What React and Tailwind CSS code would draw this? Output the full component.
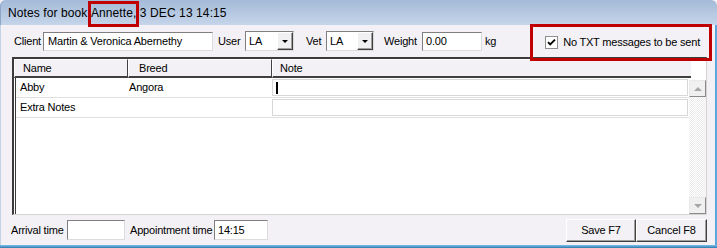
import React from "react";

const sunken =
  "bg-white border border-t-[#7f7f7f] border-l-[#7f7f7f] border-r-[#dcdcdc] border-b-[#dcdcdc]";
const raised =
  "bg-[#f3f1f6] border border-t-white border-l-white border-r-[#404040] border-b-[#404040] shadow-[inset_-1px_-1px_0_#a0a0a0]";

function DropBtn() {
  return (
    <div className="w-[16px] h-full flex items-center justify-center bg-[#f0eff2] border border-t-white border-l-white border-r-[#404040] border-b-[#404040] shadow-[inset_-1px_-1px_0_#a0a0a0]">
      <div className="w-0 h-0 border-l-[3px] border-r-[3px] border-t-[3px] border-l-transparent border-r-transparent border-t-black mt-[1px]" />
    </div>
  );
}

function ScrollBtn({ up }) {
  return (
    <div className="h-[17px] flex items-center justify-center bg-[#f0f0f0] border border-t-[#e8e8e8] border-l-[#e8e8e8] border-r-[#8a8a8a] border-b-[#8a8a8a]">
      {up ? (
        <div className="w-0 h-0 border-l-[4px] border-r-[4px] border-b-[4px] border-l-transparent border-r-transparent border-b-[#a6a6a6]" />
      ) : (
        <div className="w-0 h-0 border-l-[4px] border-r-[4px] border-t-[4px] border-l-transparent border-r-transparent border-t-[#a6a6a6]" />
      )}
    </div>
  );
}

export default function App() {
  return (
    <div className="w-[717px] h-[248px] flex flex-col overflow-hidden bg-[#f3f1f6] text-black text-[11px] tracking-[-0.2px] font-['Liberation_Sans',Arial,sans-serif] leading-none">
      {/* Title bar */}
      <div className="h-[25px] shrink-0 flex items-center pl-[7px] pt-[1px] rounded-t-[6px] bg-gradient-to-b from-[#a4bad8] to-[#c5d5ea] border-l border-l-[#8da6c8] text-[12px] tracking-[0.1px]">
        <span>Notes for book&nbsp;</span>
        <span className="relative">
          Annette,
          <span className="absolute left-[-3px] right-[-3px] top-[-6px] bottom-[-8px] border-[3px] border-[#c00000]" />
        </span>
        <span>&nbsp;3 DEC 13 14:15</span>
      </div>

      {/* Body */}
      <div className="flex-1 flex flex-col border-l border-l-[#c4d2e4] border-r-[2px] border-r-[#5aa7db]">
        {/* Top controls row */}
        <div className="h-[32px] shrink-0 flex items-center pl-[13px] pr-[12px]">
          <span className="w-[29px]">Client</span>
          <div className={`w-[170px] h-[19px] flex items-center pl-[4px] ${sunken}`}>
            Martin &amp; Veronica Abernethy
          </div>
          <span className="ml-[5px] w-[27px]">User</span>
          <div className={`w-[49px] h-[20px] flex ${sunken}`}>
            <span className="flex-1 flex items-center pl-[3px]">LA</span>
            <DropBtn />
          </div>
          <span className="ml-[12px] w-[20px]">Vet</span>
          <div className={`w-[48px] h-[20px] flex ${sunken}`}>
            <span className="flex-1 flex items-center pl-[3px]">LA</span>
            <DropBtn />
          </div>
          <span className="ml-[10px] w-[38px]">Weight</span>
          <div className={`w-[60px] h-[19px] flex items-center pl-[3px] ${sunken}`}>
            0.00
          </div>
          <span className="ml-[3px]">kg</span>

          <div className="ml-auto relative flex items-center pr-[3px] mt-[3px]">
            <span className="absolute left-[-15px] right-[-9px] top-[-12px] bottom-[-12px] border-[3px] border-[#c00000]" />
            <div className="w-[13px] h-[13px] bg-white border border-[#8e8f8f] flex items-center justify-center">
              <svg width="9" height="9" viewBox="0 0 9 9">
                <path d="M1 4.2 L3.2 6.4 L8 1.6" fill="none" stroke="#000" strokeWidth="1.8" />
              </svg>
            </div>
            <span className="ml-[5px]">No TXT messages to be sent</span>
          </div>
        </div>

        {/* Grid */}
        <div className="ml-[11px] mr-[8px] h-[158px] shrink-0 flex flex-col bg-white border-t-2 border-l-2 border-t-[#3c3c3c] border-l-[#3c3c3c] border-r border-b border-r-[#d4d4d4] border-b-[#d4d4d4]">
          <div className="h-[19px] shrink-0 flex">
            <div className="w-[114px] flex items-center pl-[8px] bg-[#f3f1f6] border-t border-l border-t-white border-l-white border-r border-r-[#404040] border-b-2 border-b-[#404040]">
              Name
            </div>
            <div className="w-[144px] flex items-center pl-[10px] bg-[#f3f1f6] border-t border-l border-t-white border-l-white border-r border-r-[#404040] border-b-2 border-b-[#404040]">
              Breed
            </div>
            <div className="w-[419px] flex items-center pl-[7px] bg-[#f3f1f6] border-t border-l border-t-white border-l-white border-b-2 border-b-[#404040]">
              Note
            </div>
            <div className="flex-1 bg-white" />
          </div>
          <div className="flex-1 flex">
            <div className="flex-1 flex flex-col ml-[1px] border-l border-l-[#3c3c3c]">
              <div className="h-[20px] flex border-b border-b-[#e0e0e0]">
                <div className="w-[112px] flex items-center pl-[4px]">Abby</div>
                <div className="w-[144px] flex items-center pl-[1px]">Angora</div>
                <div className="w-[416px] mt-[1px] h-[17px] border border-[#d8d8d8] flex items-center pl-[3px]">
                  <div className="w-[2px] h-[12px] bg-black" />
                </div>
              </div>
              <div className="h-[20px] flex border-b border-b-[#e0e0e0]">
                <div className="w-[256px] flex items-center pl-[4px]">Extra Notes</div>
                <div className="w-[416px] mt-[1px] h-[17px] border border-[#d8d8d8]" />
              </div>
            </div>
            <div className="w-[17px] flex flex-col pt-[2px]">
              <ScrollBtn up />
              <div className="flex-1 bg-[repeating-conic-gradient(#ebebeb_0_25%,#ffffff_0_50%)] bg-[length:2px_2px]" />
              <ScrollBtn />
            </div>
          </div>
        </div>

        {/* Bottom row */}
        <div className="flex-1 flex items-center pl-[10px] pr-[8px]">
          <span className="w-[56px]">Arrival time</span>
          <div className={`w-[58px] h-[20px] ${sunken}`} />
          <span className="ml-[5px] w-[84px]">Appointment time</span>
          <div className={`w-[54px] h-[20px] flex items-center pl-[3px] ${sunken}`}>14:15</div>
          <div className="ml-auto flex">
            <div className={`w-[70px] h-[23px] flex items-center justify-center ${raised}`}>Save F7</div>
            <div className={`w-[71px] h-[23px] flex items-center justify-center ${raised}`}>Cancel F8</div>
          </div>
        </div>
      </div>
      <div className="h-[3px] shrink-0 bg-gradient-to-b from-[#7cc3ec] to-[#2d79ad]" />
    </div>
  );
}
